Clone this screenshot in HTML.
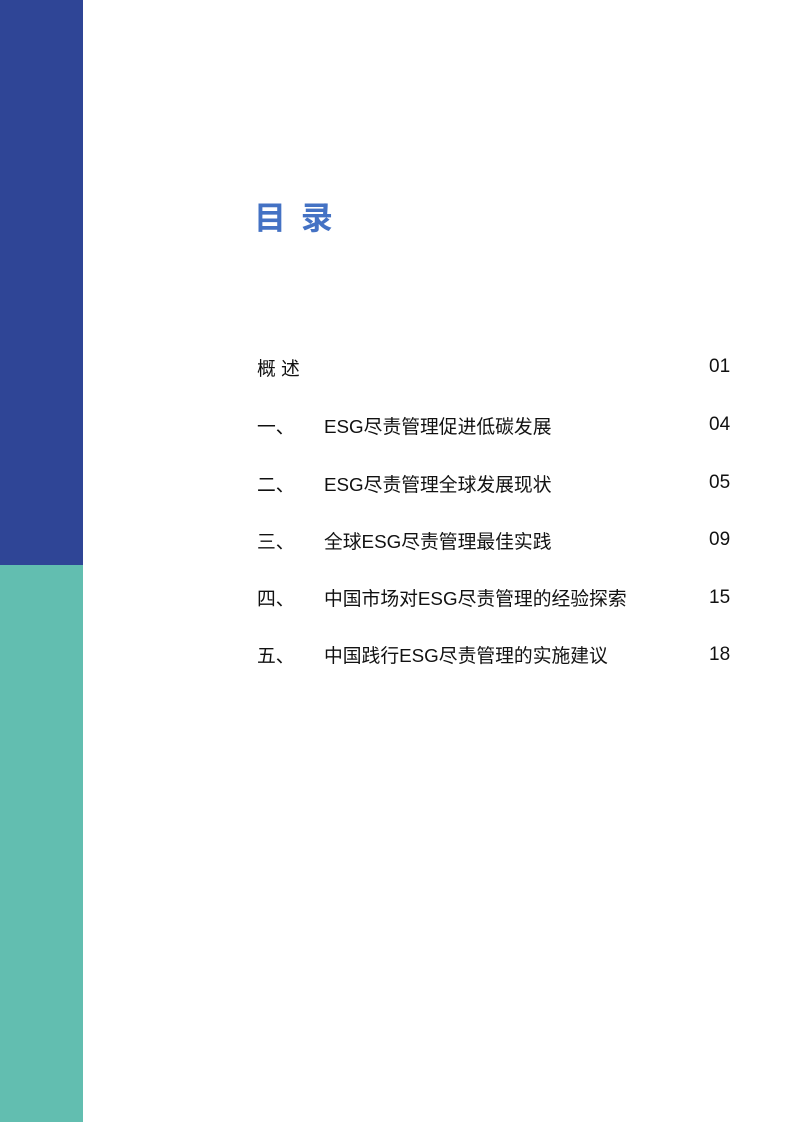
<!DOCTYPE html>
<html><head><meta charset="utf-8"><style>
body{margin:0;width:793px;height:1122px;position:relative;background:#fff;font-family:"Liberation Sans","Noto Sans CJK SC",sans-serif;overflow:hidden}
.b1{position:absolute;left:0;top:0;width:83px;height:565px;background:#2F4596}
.b2{position:absolute;left:0;top:565px;width:83px;height:557px;background:#62BEB0}
.t{position:absolute;left:254px;top:198px;font-size:32px;font-weight:bold;color:#4472C4;letter-spacing:3px;line-height:40px}
.r{position:absolute;font-size:18.8px;color:#111;line-height:24px;white-space:nowrap}
.n{position:absolute;left:709px;font-size:19px;color:#111;line-height:24px}
</style></head><body>
<div class="b1"></div><div class="b2"></div>
<div class="t">目 录</div>
<div class="r" style="left:257px;top:357px">概 述</div><div class="n" style="top:355px">01</div>
<div class="r" style="left:257px;top:415px">一、</div><div class="r" style="left:324px;top:415px">ESG尽责管理促进低碳发展</div><div class="n" style="top:413px">04</div>
<div class="r" style="left:257px;top:473px">二、</div><div class="r" style="left:324px;top:473px">ESG尽责管理全球发展现状</div><div class="n" style="top:471px">05</div>
<div class="r" style="left:257px;top:530px">三、</div><div class="r" style="left:324px;top:530px">全球ESG尽责管理最佳实践</div><div class="n" style="top:528px">09</div>
<div class="r" style="left:257px;top:587px">四、</div><div class="r" style="left:324px;top:587px">中国市场对ESG尽责管理的经验探索</div><div class="n" style="top:586px">15</div>
<div class="r" style="left:257px;top:644px">五、</div><div class="r" style="left:324px;top:644px">中国践行ESG尽责管理的实施建议</div><div class="n" style="top:643px">18</div>
</body></html>
